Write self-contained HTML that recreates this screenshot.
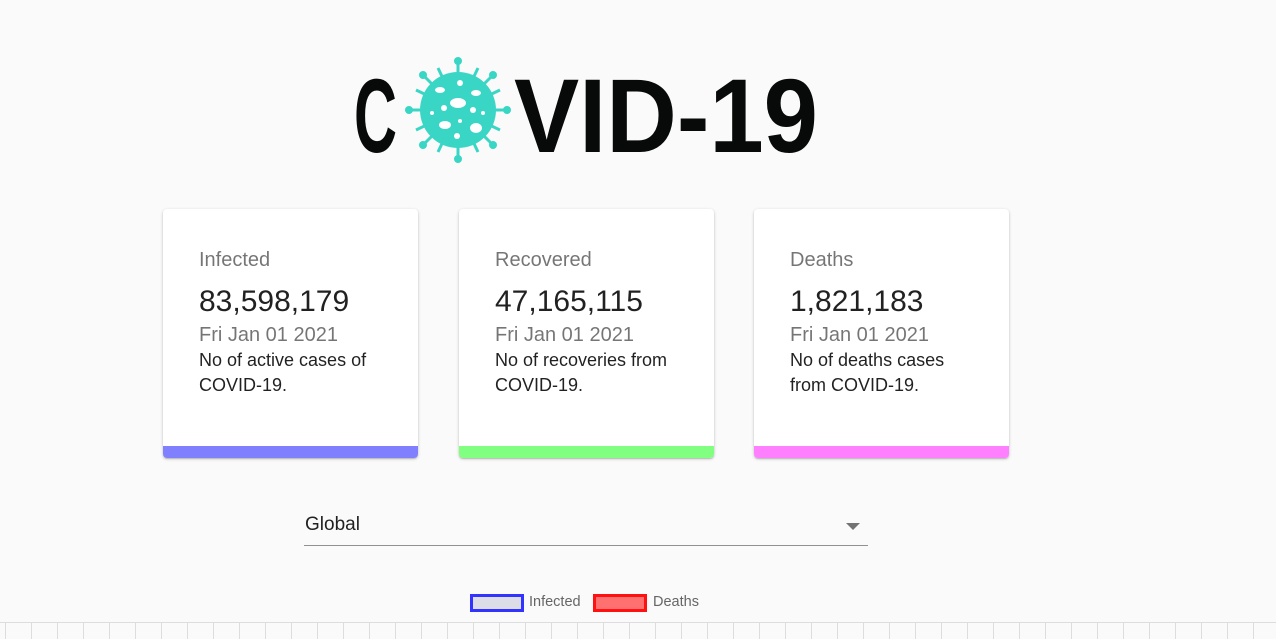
<!DOCTYPE html>
<html><head><meta charset="utf-8"><style>
body{margin:0;width:1276px;height:638px;background:#fafafa;font-family:"Liberation Sans",sans-serif;position:relative;overflow:hidden}
.card{position:absolute;top:209px;width:255px;height:249px;background:#fff;border-radius:4px;box-shadow:0 1px 3px rgba(0,0,0,.2),0 1px 1px rgba(0,0,0,.14);overflow:hidden}
.card .in{position:absolute;left:36px;top:39px;width:185px}
.lab{font-size:20px;color:rgba(0,0,0,.54);line-height:24px}
.num{font-size:30px;color:rgba(0,0,0,.87);margin-top:13px;line-height:34px}
.dt{font-size:20px;color:rgba(0,0,0,.54);line-height:24px;margin-top:4px}
.ds{font-size:18px;color:rgba(0,0,0,.87);line-height:25px;margin-top:1px}
.bar{position:absolute;left:0;right:0;bottom:0;height:12px}
.grid{position:absolute;left:0;right:0;top:622px;height:16px;border-top:1px solid #ddd;background-image:linear-gradient(90deg,#ddd 1px,transparent 1px);background-size:26px 16px;background-position:5px 0}
</style></head><body>
<svg width="1276" height="200" style="position:absolute;left:0;top:0">
<g font-family="Liberation Sans,sans-serif" font-weight="bold" fill="#070a08">
<text x="354" y="152" font-size="116" textLength="43" lengthAdjust="spacingAndGlyphs" transform="translate(0,15.2) scale(1,0.9)">C</text>
<text x="514" y="152" font-size="116" textLength="304" lengthAdjust="spacingAndGlyphs" transform="translate(0,15.2) scale(1,0.9)">VID-19</text>
</g>
<g fill="#3ad6c5" stroke="#3ad6c5">
<g stroke-width="3">
<line x1="458" y1="110" x2="458" y2="62"/><line x1="458" y1="110" x2="458" y2="158"/>
<line x1="458" y1="110" x2="410" y2="110"/><line x1="458" y1="110" x2="506" y2="110"/>
<line x1="458" y1="110" x2="424" y2="76"/><line x1="458" y1="110" x2="492" y2="76"/>
<line x1="458" y1="110" x2="424" y2="144"/><line x1="458" y1="110" x2="492" y2="144"/>
<line x1="458" y1="110" x2="438" y2="68"/><line x1="458" y1="110" x2="478" y2="68"/>
<line x1="458" y1="110" x2="416" y2="90"/><line x1="458" y1="110" x2="500" y2="90"/>
<line x1="458" y1="110" x2="416" y2="130"/><line x1="458" y1="110" x2="500" y2="130"/>
<line x1="458" y1="110" x2="438" y2="152"/><line x1="458" y1="110" x2="478" y2="152"/>
</g>
<circle cx="458" cy="110" r="38" stroke="none"/>
<circle cx="458" cy="61" r="4" stroke="none"/><circle cx="458" cy="159" r="4" stroke="none"/>
<circle cx="409" cy="110" r="4" stroke="none"/><circle cx="507" cy="110" r="4" stroke="none"/>
<circle cx="423" cy="75" r="4" stroke="none"/><circle cx="493" cy="75" r="4" stroke="none"/>
<circle cx="423" cy="145" r="4" stroke="none"/><circle cx="493" cy="145" r="4" stroke="none"/>
</g>
<g fill="#fff">
<ellipse cx="458" cy="103" rx="8" ry="5"/><ellipse cx="440" cy="90" rx="5" ry="3"/><ellipse cx="476" cy="93" rx="5" ry="3"/>
<ellipse cx="460" cy="83" rx="3" ry="3"/><ellipse cx="445" cy="125" rx="6" ry="4"/><ellipse cx="476" cy="128" rx="6" ry="5"/>
<circle cx="444" cy="108" r="3"/><circle cx="473" cy="110" r="3"/><circle cx="460" cy="121" r="2"/><circle cx="457" cy="136" r="3"/><circle cx="483" cy="113" r="2"/><circle cx="432" cy="113" r="2"/>
</g>
</svg>
<div class="card" style="left:163px"><div class="in"><div class="lab">Infected</div><div class="num">83,598,179</div><div class="dt">Fri Jan 01 2021</div><div class="ds">No of active cases of COVID-19.</div></div><div class="bar" style="background:#8080ff"></div></div>
<div class="card" style="left:459px"><div class="in"><div class="lab">Recovered</div><div class="num">47,165,115</div><div class="dt">Fri Jan 01 2021</div><div class="ds">No of recoveries from COVID-19.</div></div><div class="bar" style="background:#80ff80"></div></div>
<div class="card" style="left:754px"><div class="in"><div class="lab">Deaths</div><div class="num">1,821,183</div><div class="dt">Fri Jan 01 2021</div><div class="ds">No of deaths cases from COVID-19.</div></div><div class="bar" style="background:#ff80ff"></div></div>
<div style="position:absolute;left:304px;top:512px;width:564px;height:33px;border-bottom:1px solid rgba(0,0,0,.42)">
<span style="position:absolute;left:1px;top:2px;font-size:19px;color:rgba(0,0,0,.87)">Global</span>
<span style="position:absolute;right:8px;top:11px;width:0;height:0;border-left:7px solid transparent;border-right:7px solid transparent;border-top:7px solid rgba(0,0,0,.54)"></span>
</div>
<div style="position:absolute;left:470px;top:594px;border:3px solid #3333ff;background:#dddde8;box-sizing:border-box;width:54px;height:18px"></div>
<span style="position:absolute;left:529px;top:594px;font-size:14.5px;color:#666">Infected</span>
<div style="position:absolute;left:593px;top:594px;border:3px solid #ff1111;background:#ff7070;box-sizing:border-box;width:54px;height:18px"></div>
<span style="position:absolute;left:653px;top:594px;font-size:14.5px;color:#666">Deaths</span>
<div class="grid"></div>
</body></html>
